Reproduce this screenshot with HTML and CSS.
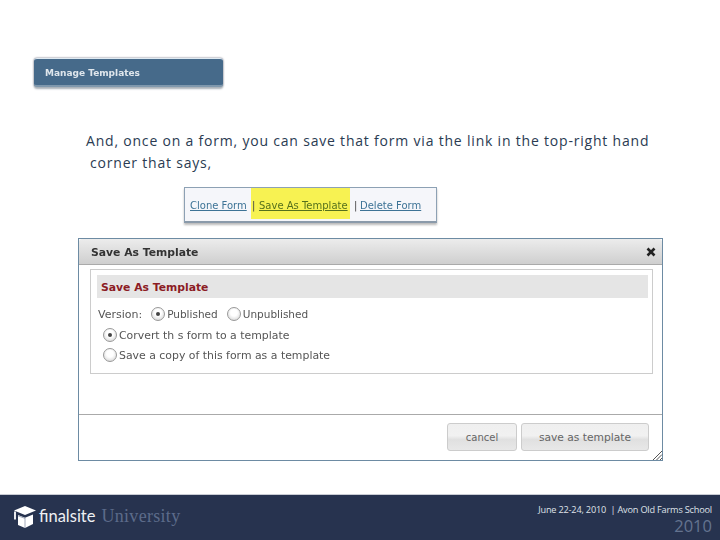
FILE: index.html
```html
<!DOCTYPE html>
<html lang="en">
<head>
<meta charset="utf-8">
<title>Save As Template</title>
<link rel="stylesheet" href="styles.css">
</head>
<body>
<main class="slide">
  <div class="content">
    <div class="manage-bar"><span>Manage Templates</span></div>
    <p class="lead">And, once on a form, you can save that form via the link in the top-right hand<br><span class="lead-indent">corner that says,</span></p>
    <div class="links">
      <a class="link link-clone">Clone Form</a>
      <span class="mark"><span class="sep">|</span><a class="link mark-link">Save As Template</a></span>
      <span class="sep sep-after">|</span><a class="link">Delete Form</a>
    </div>
    <section class="dialog">
      <header class="dialog-head">
        <h2>Save As Template</h2>
        <svg class="close" width="10" height="10" viewBox="0 0 10 10"><path d="M1.500 1.500 8.500 8.500M8.500 1.500 1.500 8.500" stroke="#222" stroke-width="2.600" fill="none"/></svg>
      </header>
      <div class="dialog-body">
        <div class="form-box">
          <h3>Save As Template</h3>
          <div class="row version">
            <span class="version-label">Version:</span>
            <span class="radio on"></span><span class="opt">Published</span>
            <span class="radio second"></span><span class="opt">Unpublished</span>
          </div>
          <div class="row choice"><span class="radio on"></span><span class="opt">Corvert th s form to a template</span></div>
          <div class="row choice"><span class="radio"></span><span class="opt">Save a copy of this form as a template</span></div>
        </div>
      </div>
      <footer class="dialog-foot">
        <button class="btn btn-cancel">cancel</button>
        <button class="btn btn-save">save as template</button>
        <svg class="grip" width="11" height="11" viewBox="0 0 11 11"><path d="M1 10 10 1M4.500 10 10 4.500M8 10 10 8" stroke="#555" stroke-width="1" fill="none"/></svg>
      </footer>
    </section>
  </div>
  <footer class="brand">
    <div class="logo">
      <svg class="cap" width="24" height="22" viewBox="0 0 24 22"><path d="M1 4.500 12 0l11 4.500-11 4.500z" fill="#fff"/><path d="M5 9l7 2.800L20 8.600V18l-8 4-7-3z" fill="#fff"/><path d="M2 5.500v8" stroke="#fff" stroke-width="1.800" fill="none"/><path d="M12 12v10M5 9.800l7 2.600" stroke="#8d96aa" stroke-width="0.800" fill="none"/></svg>
      <span class="logo-a">finalsite</span><span class="logo-b">University</span>
    </div>
    <div class="event">
      <div class="event-line">June 22-24, 2010 &nbsp;|&nbsp;Avon Old Farms School</div>
      <div class="event-year">2010</div>
    </div>
  </footer>
</main>
</body>
</html>
```
FILE: styles.css
```css
* { box-sizing: border-box; }
html, body { margin: 0; padding: 0; background: #fff; }
.slide { width: 720px; height: 540px; display: flex; flex-direction: column; overflow: hidden; font-family: "DejaVu Sans", sans-serif; }
.content { height: 494px; padding-top: 58px; display: flex; flex-direction: column; }

.manage-bar { margin-left: 34px; width: 189px; height: 29px; background: #466a8a; border-radius: 3px; border-top: 1px solid #dfeaf2; border-bottom: 2px solid #7f98ad; box-shadow: 0 2px 2px #aab2b9, 0 0 2px #556; display: flex; align-items: center; padding: 2px 0 0 11px; color: #dfe6ec; font-size: 9px; font-weight: 700; filter: blur(0.4px); }

.lead { margin: 43px 0 0 86px; font-family: "Open Sans", sans-serif; font-size: 14px; letter-spacing: 0.8px; line-height: 22px; color: #2a3b52; white-space: nowrap; }
.lead-indent { margin-left: 4px; }

.links { margin: 13px 0 0 184px; width: 253px; height: 36px; background: #f5f6fa; border: 1px solid #8da1b4; border-bottom: 2px solid #8a9aaa; box-shadow: 0 2px 2px #bbb; display: flex; align-items: flex-start; padding-left: 5px; font-size: 10px; line-height: 35px; color: #444; filter: blur(0.4px); }
.link { color: #3d7396; text-decoration: underline; white-space: nowrap; }
.link-clone { width: 61px; }
.mark { background: #f7f252; height: 31px; width: 99px; padding-left: 1px; display: flex; white-space: nowrap; }
.sep { width: 7px; flex: none; }
.sep-after { margin-left: 4px; width: 6px; }
.mark-link { color: #55701c; }

.dialog { margin: 15px 0 0 78px; width: 585px; height: 223px; border: 1px solid #6d8ba3; background: #fff; display: flex; flex-direction: column; }
.dialog-head { height: 26px; flex: none; background: linear-gradient(#ececec, #cfcfcf); border-bottom: 1px solid #aaa; border-radius: 3px 3px 0 0; display: flex; align-items: center; justify-content: space-between; padding: 0 6px 0 12px; }
.dialog-head h2 { margin: 0; padding-top: 2px; font-size: 10.800px; font-weight: 700; color: #333; filter: blur(0.3px); }
.dialog-body { flex: 1; padding: 4px 9px 0 11px; }
.form-box { height: 105px; border: 1px solid #ccc; padding: 5px 4px 0 6px; }
.form-box h3 { margin: 0; height: 23px; line-height: 25px; background: #e5e5e5; padding-left: 4px; font-size: 10.800px; font-weight: 700; color: #8c1c24; }
.row { display: flex; align-items: center; font-size: 10.900px; color: #555; height: 20px; filter: blur(0.25px); }
.version { margin-top: 6px; padding-left: 1px; font-size: 10.500px; }
.version-label { margin-right: 9px; font-size: 11px; }
.choice { padding-left: 6px; margin-top: 1px; }
.choice + .choice { margin-top: 0; }
.radio { width: 14px; height: 14px; flex: none; border-radius: 50%; border: 1px solid #999; background: radial-gradient(circle at 50% 40%, #fff 35%, #ccc 100%); display: flex; align-items: center; justify-content: center; margin-right: 2px; }
.radio.on::after { content: ""; width: 4px; height: 4px; border-radius: 50%; background: #444; }
.radio.second { margin-left: 9px; }

.dialog-foot { height: 46px; flex: none; border-top: 1px solid #aaa; display: flex; justify-content: flex-end; gap: 4px; padding: 8px 13px 0 0; position: relative; }
.btn { height: 28px; border: 1px solid #ccc; border-radius: 3px; background: linear-gradient(#efefef, #f1f1f1 45%, #e0e0e0 60%, #e8e8e8); font-family: inherit; font-size: 10.700px; color: #666; padding: 0; }
.btn-cancel { width: 70px; font-size: 10px; }
.btn-save { width: 128px; }
.grip { position: absolute; right: -1px; bottom: -1px; }

.brand { height: 46px; flex: none; background: #27334f; border-top: 1px solid #c9ccd4; display: flex; justify-content: space-between; padding: 0 8px 0 13px; }
.logo { display: flex; align-items: center; height: 42px; }
.cap { margin-right: 2px; margin-top: 1px; }
.logo-a { font-family: "Lato", sans-serif; font-size: 16.500px; color: #eef0f4; margin-right: 6px; }
.logo-b { font-family: "Liberation Serif", serif; font-size: 18px; color: #5c6b8a; letter-spacing: 0.3px; }
.event { text-align: right; }
.event-line { margin-top: 8px; font-family: "Open Sans", sans-serif; font-size: 9.200px; letter-spacing: -0.2px; color: #dfe2e8; }
.event-year { font-family: "Open Sans", sans-serif; font-size: 16.500px; line-height: 19px; color: #64738f; }
```
